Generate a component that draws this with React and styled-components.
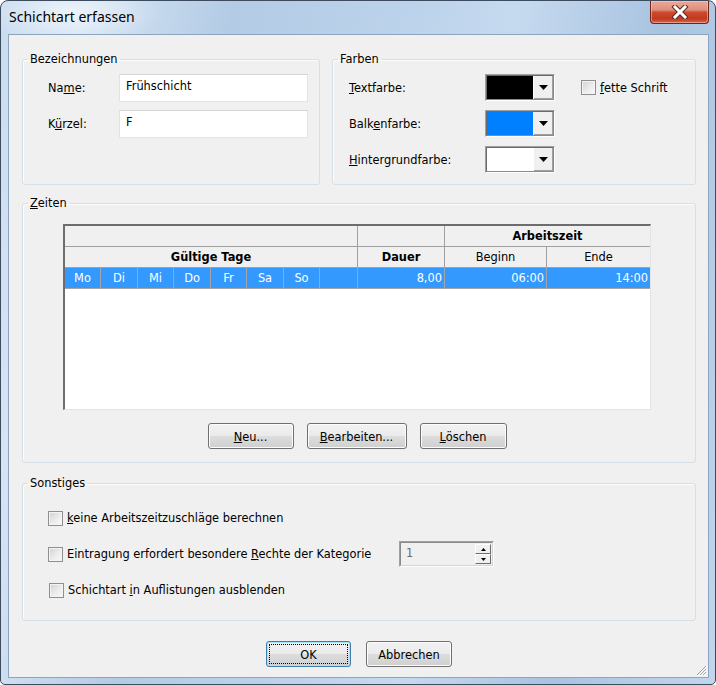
import React from 'react';
import styled, { createGlobalStyle } from 'styled-components';

const GlobalStyle = createGlobalStyle`
  html, body {
    margin: 0;
    padding: 0;
    background: #ffffff;
  }
  * {
    box-sizing: border-box;
  }
`;

const Window = styled.div`
  position: relative;
  width: 716px;
  height: 685px;
  border: 1px solid #3d4b5e;
  border-radius: 8px 8px 5px 5px;
  overflow: hidden;
  display: flex;
  flex-direction: column;
  font-family: "DejaVu Sans", Tahoma, sans-serif;
  font-size: 11.4px;
  color: #000;
  background:
    radial-gradient(ellipse 90px 30px at 70px 12px, rgba(255, 255, 255, 0.55), rgba(255, 255, 255, 0) 100%),
    linear-gradient(100deg, #c9dcef 0%, #d6e5f4 10%, #b3cbe5 28%, #bcd3eb 50%, #c6daef 62%, #a9c3e0 80%, #c1d6ec 100%);
`;

const TitleBar = styled.div`
  height: 33px;
  flex-shrink: 0;
  display: flex;
  justify-content: space-between;
  align-items: flex-start;
`;

const Title = styled.div`
  font-family: "Noto Sans", "Open Sans", sans-serif;
  font-size: 14px;
  line-height: 20px;
  padding: 6px 0 0 8px;
  color: #000;
`;

const CloseButton = styled.div`
  width: 59px;
  height: 23px;
  margin-right: 6px;
  border: 1px solid #6e2418;
  border-top: none;
  border-radius: 0 0 4px 4px;
  display: flex;
  align-items: center;
  justify-content: center;
  background: linear-gradient(#eaa99b 0%, #df8f7d 40%, #cc4a30 52%, #c23a1f 80%, #d2654c 100%);
  box-shadow: inset 0 0 0 1px rgba(255, 210, 200, 0.5);
`;

const Client = styled.div`
  position: relative;
  flex: 1;
  margin: 0 6px 6px 7px;
  border: 1px solid #8ea3bd;
  background: #f0f0f0;
  padding: 17px 12px 0 13px;
  display: flex;
  flex-direction: column;
`;

const TopRow = styled.div`
  display: flex;
  gap: 12px;
`;

const GroupBox = styled.fieldset`
  margin: 0;
  padding: 0;
  min-width: 0;
  width: ${p => (p.$w ? `${p.$w}px` : 'auto')};
  height: ${p => p.$h}px;
  margin-top: ${p => p.$mt || 0}px;
  border: 1px solid #d5dfe5;
  border-radius: 3px;
  box-shadow: inset 1px 1px 0 #fdfdfd;
`;

const Legend = styled.legend`
  margin-left: 5px;
  padding: 0 2px;
  line-height: 15px;
`;

const U = styled.span`
  text-decoration: underline;
`;

const NamesGrid = styled.div`
  padding: 7px 0 0 25px;
  display: grid;
  grid-template-columns: 71px 189px;
  grid-auto-rows: 28px;
  row-gap: 8px;
  align-items: center;
`;

const TextField = styled.div`
  height: 28px;
  background: #fff;
  border: 1px solid #e1e3e8;
  border-top-color: #d2d5da;
  padding: 4px 6px;
  line-height: 15px;
`;

const ColorsGrid = styled.div`
  padding: 7px 0 0 16px;
  display: grid;
  grid-template-columns: 136px 70px auto;
  grid-auto-rows: 27px;
  row-gap: 9px;
  align-items: center;
`;

const ColorCombo = styled.div`
  width: 70px;
  height: 27px;
  border: 1px solid;
  border-color: #a0a0a0 #ffffff #ffffff #a0a0a0;
  display: flex;
`;

const ComboInner = styled.div`
  flex: 1;
  display: flex;
  border: 1px solid #6b6b6b;
  border-right-color: #8a8a8a;
  border-bottom-color: #8a8a8a;
`;

const Swatch = styled.div`
  flex: 1;
  background: ${p => p.$color};
`;

const ComboArrow = styled.div`
  width: 20px;
  display: flex;
  align-items: center;
  justify-content: center;
  background: #f0f0f0;
  border-left: 1px solid #fff;
  box-shadow: inset -1px -1px 0 #a0a0a0;
`;

const CheckRow = styled.label`
  display: flex;
  align-items: center;
  gap: 4px;
  margin-left: ${p => p.$ml || 0}px;
  height: ${p => p.$h || 26}px;
  white-space: nowrap;
`;

const CheckBox = styled.span`
  width: 15px;
  height: 15px;
  flex-shrink: 0;
  border: 1px solid #8e8f8f;
  background: linear-gradient(135deg, #d2d2d2 0%, #ececec 55%, #f8f8f8 100%);
  box-shadow: inset 0 0 0 1px #f4f4f4;
`;

const TimesBody = styled.div`
  padding: 13px 0 0 40px;
  width: 628px;
`;

const Table = styled.div`
  width: 588px;
  height: 186px;
  background: #fff;
  border-style: solid;
  border-width: 2px 1px 1px 2px;
  border-color: #6d6d6d #e3e3e3 #e3e3e3 #6d6d6d;
  display: grid;
  grid-template-columns: 36px 37px 36px 37px 36px 37px 36px 38px 87px 102px 103px;
  grid-template-rows: 21px 21px 21px;
  align-content: start;
`;

const HeadCell = styled.div`
  grid-column: ${p => p.$col || 'auto'};
  background: #f0f0f0;
  border-right: ${p => (p.$last ? 'none' : '1px solid #a0a0a0')};
  border-bottom: 1px solid #a0a0a0;
  display: flex;
  align-items: center;
  justify-content: center;
  font-weight: ${p => (p.$bold ? 'bold' : 'normal')};
  white-space: nowrap;
`;

const DataCell = styled.div`
  background: #3399ff;
  color: #fff;
  border-right: ${p => (p.$last ? 'none' : '1px solid #a5a5a5')};
  border-bottom: 1px solid #a5a5a5;
  display: flex;
  align-items: center;
  justify-content: ${p => (p.$right ? 'flex-end' : 'center')};
  padding-right: ${p => (p.$right ? '2px' : '0')};
`;

const ButtonRow = styled.div`
  display: flex;
  justify-content: center;
  gap: ${p => p.$gap || 13}px;
  margin-top: ${p => p.$mt || 0}px;
  width: ${p => (p.$w ? `${p.$w}px` : 'auto')};
`;

const Button = styled.div`
  position: relative;
  width: ${p => p.$w}px;
  height: 26px;
  border: 1px solid ${p => (p.$default ? '#3c7fb1' : '#707070')};
  border-radius: 3px;
  display: flex;
  align-items: center;
  justify-content: center;
  background: linear-gradient(#f2f2f2 0%, #ebebeb 48%, #dddddd 52%, #cfcfcf 100%);
  box-shadow: inset 0 0 0 1px ${p => (p.$default ? '#a6e2f8' : '#fcfcfc')};
  padding-top: 1px;
`;

const FocusRing = styled.span`
  position: absolute;
  inset: 2px;
  border: 1px dotted #000;
  border-radius: 1px;
`;

const OtherBody = styled.div`
  padding: 14px 0 0 25px;
  display: flex;
  flex-direction: column;
  gap: 10px;
`;

const SpinRow = styled.div`
  display: grid;
  grid-template-columns: 351px 95px;
  align-items: center;
  height: 26px;
`;

const Spinner = styled.div`
  width: 95px;
  height: 26px;
  border: 1px solid;
  border-color: #a0a0a0 #ffffff #ffffff #a0a0a0;
  display: flex;
`;

const SpinInner = styled.div`
  flex: 1;
  display: flex;
  border: 1px solid #d4d4d4;
  border-top-color: #8a8a8a;
  border-left-color: #8a8a8a;
  background: #f0f0f0;
`;

const SpinValue = styled.div`
  flex: 1;
  color: #6d6d6d;
  padding: 3px 0 0 5px;
`;

const SpinButtons = styled.div`
  width: 16px;
  margin: 1px 1px 1px 0;
  display: flex;
  flex-direction: column;
`;

const SpinBtn = styled.div`
  flex: 1;
  display: flex;
  align-items: center;
  justify-content: center;
  background: #f0f0f0;
  border: 1px solid;
  border-color: #ffffff #6d6d6d #6d6d6d #ffffff;
`;

const Grip = styled.svg`
  position: absolute;
  right: 1px;
  bottom: 1px;
`;

const Arrow = ({ up, w = 7, h = 4 }) => (
  <svg width={w} height={h} viewBox={`0 0 ${w} ${h}`}>
    <polygon
      points={up ? `0,${h} ${w},${h} ${w / 2},0` : `0,0 ${w},0 ${w / 2},${h}`}
      fill="#000"
    />
  </svg>
);

const CloseGlyph = () => (
  <svg width="18" height="14" viewBox="0 0 18 14">
    <path d="M4 2 L14 12 M14 2 L4 12" stroke="#5a2a22" strokeWidth="5" strokeLinecap="square" />
    <path d="M4 2 L14 12 M14 2 L4 12" stroke="#ffffff" strokeWidth="3" strokeLinecap="square" />
  </svg>
);

const days = ['Mo', 'Di', 'Mi', 'Do', 'Fr', 'Sa', 'So', ''];

const colors = [
  { label: <><U>T</U>extfarbe:</>, color: '#000000' },
  { label: <>Balk<U>e</U>nfarbe:</>, color: '#0080ff' },
  { label: <><U>H</U>intergrundfarbe:</>, color: '#ffffff' },
];

export default function App() {
  return (
    <>
      <GlobalStyle />
      <Window>
        <TitleBar>
          <Title>Schichtart erfassen</Title>
          <CloseButton>
            <CloseGlyph />
          </CloseButton>
        </TitleBar>
        <Client>
          <TopRow>
            <GroupBox $w={298} $h={133}>
              <Legend>Bezeichnungen</Legend>
              <NamesGrid>
                <span>Na<U>m</U>e:</span>
                <TextField>Frühschicht</TextField>
                <span>K<U>ü</U>rzel:</span>
                <TextField>F</TextField>
              </NamesGrid>
            </GroupBox>
            <GroupBox $w={364} $h={133}>
              <Legend>Farben</Legend>
              <ColorsGrid>
                {colors.map((c, i) => (
                  <React.Fragment key={i}>
                    <span>{c.label}</span>
                    <ColorCombo>
                      <ComboInner>
                        <Swatch $color={c.color} />
                        <ComboArrow>
                          <Arrow w={9} h={5} />
                        </ComboArrow>
                      </ComboInner>
                    </ColorCombo>
                    {i === 0 ? (
                      <CheckRow $ml={26} $h={27}>
                        <CheckBox />
                        <span><U>f</U>ette Schrift</span>
                      </CheckRow>
                    ) : (
                      <span />
                    )}
                  </React.Fragment>
                ))}
              </ColorsGrid>
            </GroupBox>
          </TopRow>

          <GroupBox $h={267} $mt={11}>
            <Legend><U>Z</U>eiten</Legend>
            <TimesBody>
              <Table>
                <HeadCell $col="1 / 9" />
                <HeadCell />
                <HeadCell $col="10 / 12" $bold $last>Arbeitszeit</HeadCell>
                <HeadCell $col="1 / 9" $bold>Gültige Tage</HeadCell>
                <HeadCell $bold>Dauer</HeadCell>
                <HeadCell>Beginn</HeadCell>
                <HeadCell $last>Ende</HeadCell>
                {days.map((d, i) => (
                  <DataCell key={i}>{d}</DataCell>
                ))}
                <DataCell $right>8,00</DataCell>
                <DataCell $right>06:00</DataCell>
                <DataCell $right $last>14:00</DataCell>
              </Table>
              <ButtonRow $mt={13} $w={588}>
                <Button $w={86}><span><U>N</U>eu...</span></Button>
                <Button $w={100}><span><U>B</U>earbeiten...</span></Button>
                <Button $w={87}><span><U>L</U>öschen</span></Button>
              </ButtonRow>
            </TimesBody>
          </GroupBox>

          <GroupBox $h={145} $mt={13}>
            <Legend>Sonstiges</Legend>
            <OtherBody>
              <CheckRow>
                <CheckBox />
                <span><U>k</U>eine Arbeitszeitzuschläge berechnen</span>
              </CheckRow>
              <SpinRow>
                <CheckRow>
                  <CheckBox />
                  <span>Eintragung erfordert besondere <U>R</U>echte der Kategorie</span>
                </CheckRow>
                <Spinner>
                  <SpinInner>
                    <SpinValue>1</SpinValue>
                    <SpinButtons>
                      <SpinBtn><Arrow up w={5} h={3} /></SpinBtn>
                      <SpinBtn><Arrow w={5} h={3} /></SpinBtn>
                    </SpinButtons>
                  </SpinInner>
                </Spinner>
              </SpinRow>
              <CheckRow $ml={1}>
                <CheckBox />
                <span>Schichtart <U>i</U>n Auflistungen ausblenden</span>
              </CheckRow>
            </OtherBody>
          </GroupBox>

          <ButtonRow $mt={20} $gap={15}>
            <Button $w={85} $default>
              <FocusRing />
              <span>OK</span>
            </Button>
            <Button $w={86}><span>Abbrechen</span></Button>
          </ButtonRow>

          <Grip width="12" height="12" viewBox="0 0 12 12">
            <path d="M11 2 L2 11 M11 5 L5 11 M11 8 L8 11" stroke="#a0a0a0" strokeWidth="1" />
            <path d="M12 3 L3 12 M12 6 L6 12 M12 9 L9 12" stroke="#ffffff" strokeWidth="1" />
          </Grip>
        </Client>
      </Window>
    </>
  );
}
